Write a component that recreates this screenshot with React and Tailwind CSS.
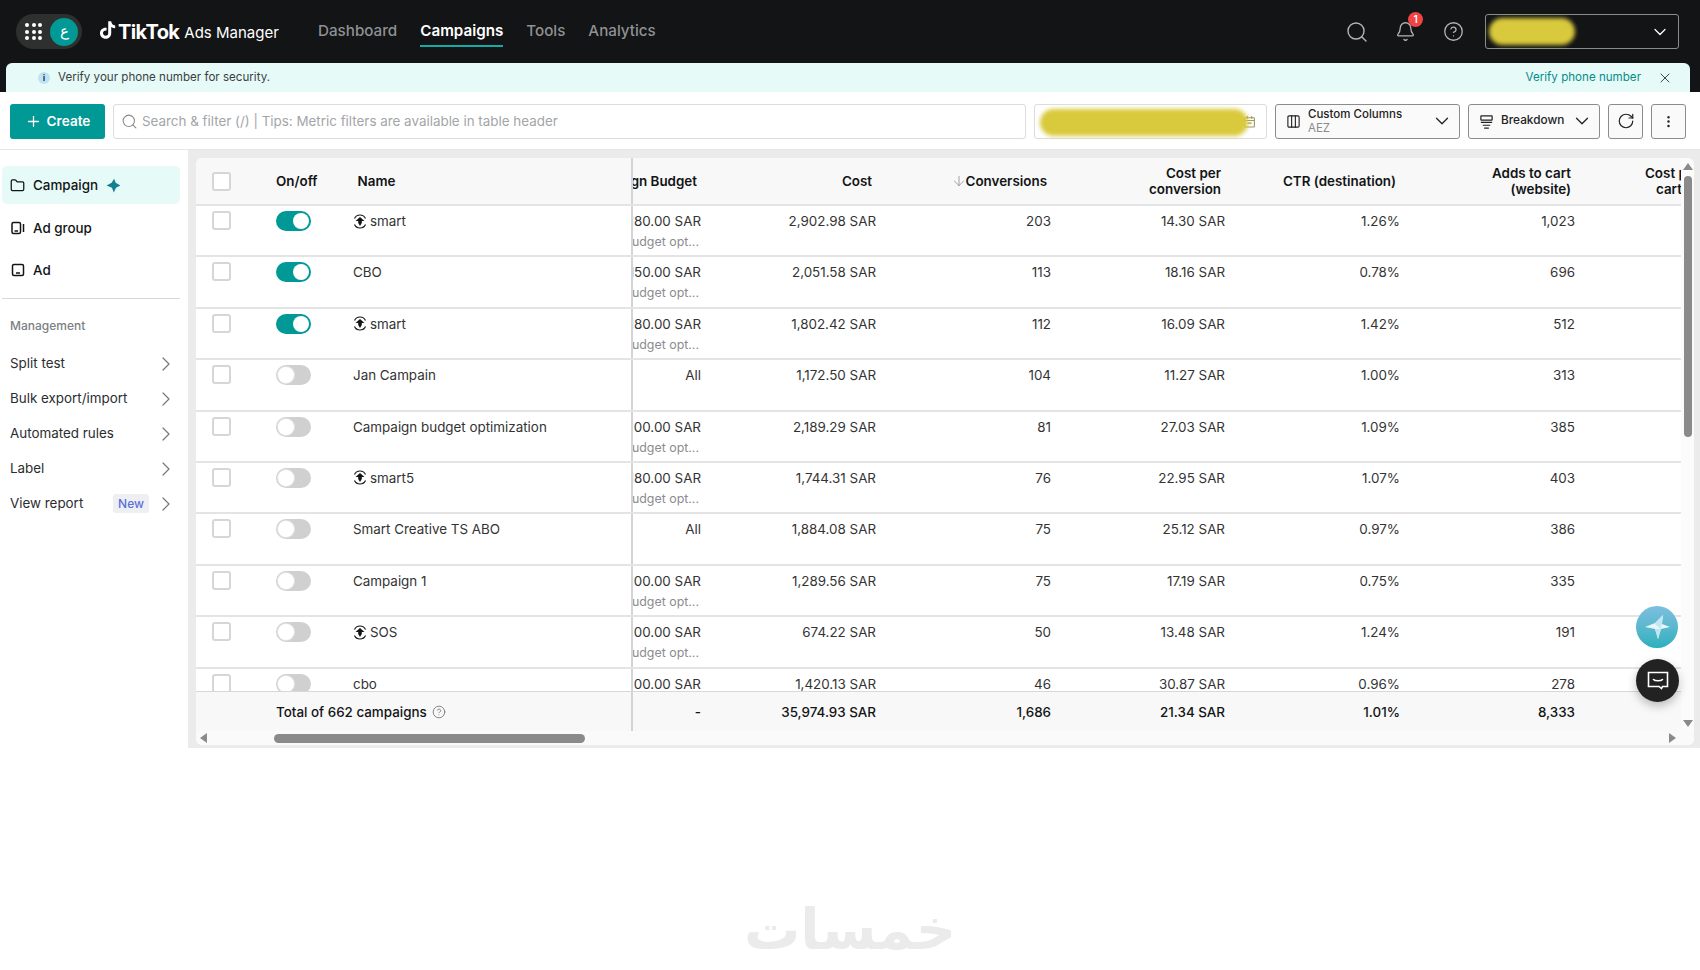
import { Search, Bell, CircleHelp, ChevronDown, ChevronRight, X, Plus, Columns3, RotateCw, EllipsisVertical, Folder, ArrowDown } from 'lucide-react'

const rows = [
  { name: 'smart', smart: true, on: true, budget: '180.00 SAR', cost: '2,902.98 SAR', conv: '203', cpc: '14.30 SAR', ctr: '1.26%', atc: '1,023' },
  { name: 'CBO', on: true, budget: '150.00 SAR', cost: '2,051.58 SAR', conv: '113', cpc: '18.16 SAR', ctr: '0.78%', atc: '696' },
  { name: 'smart', smart: true, on: true, budget: '180.00 SAR', cost: '1,802.42 SAR', conv: '112', cpc: '16.09 SAR', ctr: '1.42%', atc: '512' },
  { name: 'Jan Campain', budget: 'All', cost: '1,172.50 SAR', conv: '104', cpc: '11.27 SAR', ctr: '1.00%', atc: '313' },
  { name: 'Campaign budget optimization', budget: '100.00 SAR', cost: '2,189.29 SAR', conv: '81', cpc: '27.03 SAR', ctr: '1.09%', atc: '385' },
  { name: 'smart5', smart: true, budget: '180.00 SAR', cost: '1,744.31 SAR', conv: '76', cpc: '22.95 SAR', ctr: '1.07%', atc: '403' },
  { name: 'Smart Creative TS ABO', budget: 'All', cost: '1,884.08 SAR', conv: '75', cpc: '25.12 SAR', ctr: '0.97%', atc: '386' },
  { name: 'Campaign 1', budget: '100.00 SAR', cost: '1,289.56 SAR', conv: '75', cpc: '17.19 SAR', ctr: '0.75%', atc: '335' },
  { name: 'SOS', smart: true, budget: '100.00 SAR', cost: '674.22 SAR', conv: '50', cpc: '13.48 SAR', ctr: '1.24%', atc: '191' },
  { name: 'cbo', budget: '100.00 SAR', cost: '1,420.13 SAR', conv: '46', cpc: '30.87 SAR', ctr: '0.96%', atc: '278' },
]

const managementItems = ['Split test', 'Bulk export/import', 'Automated rules', 'Label', 'View report']

const Sparkle = ({ className }) => (
  <svg className={className} viewBox="0 0 24 24" fill="currentColor">
    <path d="M13 1l2.500 6.500L23 12l-7 3.500L12.500 23l-3-7.500L1 12l8-4.500z" />
  </svg>
)

const SmartIcon = () => (
  <svg className="w-[14px] h-[15px] shrink-0" viewBox="0 0 14 15" fill="none" stroke="#121415" strokeWidth="1.2">
    <path d="M1.500 4.500C2.500 2.300 4.500 1 7 1s4.500 1.300 5.500 3.500M1.500 10.500C2.500 12.700 4.500 14 7 14s4.500-1.300 5.500-3.500" />
    <path d="M7 3L11.500 7H8.800V9L7 12 5.200 9V7H2.500z" fill="#121415" stroke="none" />
  </svg>
)

const Toggle = ({ on }) => (
  <div className={`w-[35px] h-5 rounded-full flex items-center shrink-0 px-[2px] ${on ? 'bg-[#009995] justify-end' : 'bg-[#d0d0d0] justify-start'}`}>
    <div className={`w-4 h-4 rounded-full bg-white ${on ? '' : 'ring-1 ring-[#e4e4e4]'}`} />
  </div>
)

const Checkbox = () => (
  <div className="w-[19px] h-[19px] rounded-[3px] border-2 border-[#d6d6d6] bg-white shrink-0" />
)

const Arrow = ({ dir }) => {
  const shapes = {
    up: 'border-x-[5px] border-x-transparent border-b-[7px] border-b-[#8a8a8a]',
    down: 'border-x-[5px] border-x-transparent border-t-[7px] border-t-[#8a8a8a]',
    left: 'border-y-[5px] border-y-transparent border-r-[7px] border-r-[#8a8a8a]',
    right: 'border-y-[5px] border-y-transparent border-l-[7px] border-l-[#8a8a8a]',
  }
  return <div className={`w-0 h-0 ${shapes[dir]}`} />
}

const HeadCell = ({ children, className = 'w-[175px]' }) => (
  <div className={`${className} shrink-0 pr-2 text-right leading-[16px] font-semibold`}>{children}</div>
)

const Cell = ({ children, className = 'w-[175px]' }) => (
  <div className={`${className} shrink-0 pr-1 pt-[6px] text-right leading-[18px]`}>{children}</div>
)

const TopBar = () => (
  <header className="h-[63px] bg-[#121415] flex items-center shrink-0 pl-4 pr-[21px]">
    <div className="w-[66px] h-[35px] rounded-full bg-[#2e2f2f] flex items-center justify-between pl-[9px] pr-[4px]">
      <div className="grid grid-cols-3 gap-[2.5px]">
        {Array.from({ length: 9 }).map((_, i) => (
          <span key={i} className="w-[4px] h-[4px] rounded-full bg-white" />
        ))}
      </div>
      <div className="w-[28px] h-[28px] rounded-full bg-[#009995] text-white text-[15px] flex items-center justify-center">ع</div>
    </div>
    <div className="flex items-center ml-[16px] w-[188px] text-white">
      <svg className="w-[19px] h-[22px] mb-1" viewBox="0 0 24 24" fill="currentColor">
        <path d="M16.600 1c.4 3 2.200 5 5.100 5.300v3.400c-1.800 0-3.500-.6-5-1.600v7.600c0 4.500-3.400 7.300-7 7.300-4.200 0-7.200-3.200-7.200-7 0-4.500 3.900-7.500 8.300-6.800v3.600c-2.200-.6-4.500.8-4.500 3.100 0 2 1.600 3.400 3.400 3.400 2 0 3.200-1.400 3.200-3.500V1z" />
      </svg>
      <span className="text-[20px] font-bold tracking-[-0.6px] ml-[1px]">TikTok</span>
      <span className="text-[15px] ml-[5px] mt-[3px]">Ads Manager</span>
    </div>
    <nav className="flex items-center gap-[23px] ml-[32px] text-[15.2px] text-[#8f9194] font-medium">
      <span>Dashboard</span>
      <span className="relative text-white font-semibold">
        Campaigns
        <span className="absolute left-0 right-0 -bottom-[4px] h-[2px] bg-[#17a9a5]" />
      </span>
      <span>Tools</span>
      <span>Analytics</span>
    </nav>
    <div className="ml-auto flex items-center">
      <Search className="w-[24px] h-[24px] text-[#b4b4b4]" strokeWidth={1.4} />
      <div className="relative ml-[26px]">
        <Bell className="w-[21px] h-[21px] text-[#b4b4b4]" strokeWidth={1.5} />
        <span className="absolute -top-[9px] -right-[7px] w-[15px] h-[15px] rounded-full bg-[#f04444] text-white text-[10px] font-semibold flex items-center justify-center">1</span>
      </div>
      <CircleHelp className="w-[21px] h-[21px] ml-[27px] text-[#b4b4b4]" strokeWidth={1.5} />
      <div className="relative w-[194px] h-[35px] ml-[21px] rounded-[3px] border border-[#8c8c8c] flex items-center justify-end pr-[8px]">
        <div className="absolute left-[3px] top-[3px] w-[86px] h-[27px] rounded-full bg-[#d9c93c] blur-[2px]" />
        <ChevronDown className="w-[20px] h-[20px] text-white" strokeWidth={1.5} />
      </div>
    </div>
  </header>
)

const Banner = () => (
  <div className="h-[29px] bg-[#121415] pl-[6px] pr-[10px] shrink-0">
    <div className="h-full rounded-t-[6px] bg-[#e6faf8] flex items-center pl-[32px] pr-[17px] text-[11.6px]">
      <span className="w-[12px] h-[12px] rounded-full bg-[#bfe3f2] text-[#23405c] text-[9px] font-bold flex items-center justify-center">i</span>
      <span className="ml-[8px] text-[#3c3f41]">Verify your phone number for security.</span>
      <span className="ml-auto text-[#078d8a]">Verify phone number</span>
      <X className="w-[16px] h-[16px] ml-[16px] text-[#444]" strokeWidth={1.5} />
    </div>
  </div>
)

const Toolbar = () => (
  <div className="h-[58px] bg-white border-b border-[#e6e6e6] flex items-center gap-2 pl-[10px] pr-[14px] pt-[1px] shrink-0">
    <button className="w-[95px] h-[35px] rounded-[3px] bg-[#009995] text-white text-[13.6px] font-semibold flex items-center justify-center gap-[5px]">
      <Plus className="w-[17px] h-[17px]" strokeWidth={1.8} />
      Create
    </button>
    <div className="w-[913px] h-[35px] rounded-[3px] border border-[#dcdcdc] flex items-center pl-[7px] text-[13.4px] text-[#a3a5a8]">
      <Search className="w-[17px] h-[17px] text-[#8a8a8a]" strokeWidth={1.5} />
      <span className="ml-[4px]">Search &amp; filter (/) | Tips: Metric filters are available in table header</span>
    </div>
    <div className="relative w-[233px] h-[35px] rounded-[3px] border border-[#dcdcdc] flex items-center justify-end pr-[10px]">
      <svg className="w-[13px] h-[13px] text-[#9a9a60]" viewBox="0 0 24 24" fill="none" stroke="currentColor" strokeWidth="2">
        <rect x="3" y="5" width="18" height="17" rx="1" />
        <path d="M3 10h18M8 2v5M16 2v5M8 15h8" />
      </svg>
      <div className="absolute left-[5px] top-[4px] w-[208px] h-[27px] rounded-full bg-[#d9c93c] blur-[2px]" />
    </div>
    <button className="w-[185px] h-[35px] rounded-[3px] border border-[#8c8c8c] flex items-center pl-[10px] pr-[6px] bg-[#fafafa]">
      <Columns3 className="w-[15px] h-[15px] text-[#222]" strokeWidth={1.8} />
      <span className="ml-[7px] flex flex-col items-start text-[11.5px] leading-[14px]">
        <span className="font-medium text-[#222]">Custom Columns</span>
        <span className="text-[#8a8a8a]">AEZ</span>
      </span>
      <ChevronDown className="ml-auto w-[22px] h-[22px] text-[#222]" strokeWidth={1.4} />
    </button>
    <button className="w-[132px] h-[35px] rounded-[3px] border border-[#8c8c8c] flex items-center pl-[10px] pr-[6px] bg-[#fafafa]">
      <svg className="w-[15px] h-[15px] text-[#222]" viewBox="0 0 16 16" fill="none" stroke="currentColor" strokeWidth="1.3">
        <rect x="2" y="2" width="12" height="4.500" rx="0.5" />
        <path d="M2 9h12M4 12h8M5.500 15h5" />
      </svg>
      <span className="ml-[7px] text-[11.8px] font-medium text-[#222]">Breakdown</span>
      <ChevronDown className="ml-auto w-[22px] h-[22px] text-[#222]" strokeWidth={1.4} />
    </button>
    <button className="w-[35px] h-[35px] rounded-[3px] border border-[#8c8c8c] flex items-center justify-center bg-[#fafafa]">
      <RotateCw className="w-[18px] h-[18px] text-[#222]" strokeWidth={1.6} />
    </button>
    <button className="w-[35px] h-[35px] rounded-[3px] border border-[#8c8c8c] flex items-center justify-center bg-[#fafafa]">
      <EllipsisVertical className="w-[15px] h-[15px] text-[#222]" strokeWidth={2} />
    </button>
  </div>
)

const Sidebar = () => (
  <aside className="w-[188px] shrink-0 bg-white pl-[2px] pr-[8px] pt-4 text-[13.4px] text-[#2b2d2f]">
    <div className="h-[38px] rounded-[5px] bg-[#e6faf8] flex items-center pl-[8px] font-medium text-[#121415]">
      <Folder className="w-[15px] h-[15px]" strokeWidth={2} />
      <span className="ml-[8px]">Campaign</span>
      <Sparkle className="w-[15px] h-[15px] ml-[8px] text-[#12808f]" />
    </div>
    <div className="h-[38px] mt-[5px] flex items-center pl-[9px] font-medium text-[#121415]">
      <svg className="w-[14px] h-[14px]" viewBox="0 0 14 14" fill="none" stroke="currentColor" strokeWidth="1.500">
        <rect x="1" y="1.500" width="8.500" height="11" rx="1.500" />
        <path d="M3.500 10h3.500M12.500 3v8" />
      </svg>
      <span className="ml-[8px]">Ad group</span>
    </div>
    <div className="h-[38px] mt-[4px] flex items-center pl-[9px] font-medium text-[#121415]">
      <svg className="w-[14px] h-[14px]" viewBox="0 0 14 14" fill="none" stroke="currentColor" strokeWidth="1.500">
        <rect x="1.500" y="1.500" width="11" height="11" rx="1.500" />
        <path d="M5 10h4" />
      </svg>
      <span className="ml-[8px]">Ad</span>
    </div>
    <div className="h-[1px] bg-[#d8d8d8] mt-[9px]" />
    <div className="text-[12px] font-medium text-[#7d8084] pl-2 mt-[20px] leading-[14px]">Management</div>
    <div className="mt-[13px]">
      {managementItems.map((item) => (
        <div key={item} className="h-[35px] flex items-center pl-2 pr-[2px]">
          <span>{item}</span>
          {item === 'View report' && (
            <span className="ml-auto w-[36px] h-[19px] rounded-[3px] bg-[#eeeff2] text-[#5b6fd9] text-[12px] font-medium flex items-center justify-center">New</span>
          )}
          <ChevronRight className={`w-[24px] h-[24px] text-[#777] ${item === 'View report' ? 'ml-[5px]' : 'ml-auto'}`} strokeWidth={1.2} />
        </div>
      ))}
    </div>
  </aside>
)

const CampaignTable = () => (
  <div className="w-[1498px] h-[587px] rounded-[6px] bg-[#fbfbfb] overflow-hidden flex flex-col">
    <div className="flex h-[573px]">
      <div className="w-[1485px] flex flex-col text-[13.4px] text-[#333]">
        <div className="h-[48px] shrink-0 flex items-center bg-[#f8f8f8] border-b-2 border-[#e4e4e4] text-[#121415] overflow-hidden">
          <div className="w-[437px] h-full shrink-0 flex items-center border-r-2 border-[#d4d4d4] pl-4 font-semibold">
            <Checkbox />
            <span className="ml-[45px]">On/off</span>
            <span className="ml-[40px]">Name</span>
          </div>
          <div className="w-[72px] shrink-0 pr-2 flex justify-end overflow-hidden whitespace-nowrap font-semibold">Campaign Budget</div>
          <HeadCell>Cost</HeadCell>
          <HeadCell>
            <span className="inline-flex items-center h-[16px] mt-[2px]">
              <ArrowDown className="w-[16px] h-[16px] -mr-[1px] text-[#8a8a8a]" strokeWidth={1.2} />
              Conversions
            </span>
          </HeadCell>
          <HeadCell className="w-[174px]">Cost per<br />conversion</HeadCell>
          <HeadCell>CTR (destination)</HeadCell>
          <HeadCell>Adds to cart<br />(website)</HeadCell>
          <div className="w-[103px] shrink-0 overflow-hidden whitespace-nowrap leading-[16px] font-semibold">
            <div className="ml-[66px]">Cost per</div>
            <div className="ml-[77px]">cart</div>
          </div>
        </div>
        <div className="h-[485px] shrink-0 overflow-hidden bg-white">
          {rows.map((row, i) => (
            <div key={i} className="h-[51.4px] flex border-b-2 border-[#e4e4e4] overflow-hidden">
              <div className="w-[437px] shrink-0 flex items-start border-r-2 border-[#d4d4d4] pl-4 pt-[5px]">
                <Checkbox />
                <div className="ml-[45px]"><Toggle on={row.on} /></div>
                <div className="ml-[42px] pt-[1px] leading-[18px] flex items-center gap-[3px]">
                  {row.smart && <SmartIcon />}
                  {row.name}
                </div>
              </div>
              <div className="w-[72px] shrink-0 pr-1 pt-[6px] overflow-hidden whitespace-nowrap flex flex-col items-end leading-[18px]">
                <span>{row.budget}</span>
                {row.budget !== 'All' && <span className="mt-[3px] pr-[2px] text-[12.4px] text-[#8a8c8f]">Campaign budget opt...</span>}
              </div>
              <Cell>{row.cost}</Cell>
              <Cell>{row.conv}</Cell>
              <Cell className="w-[174px]">{row.cpc}</Cell>
              <Cell>{row.ctr}</Cell>
              <Cell>{row.atc}</Cell>
            </div>
          ))}
        </div>
        <div className="h-[40px] shrink-0 flex items-center bg-[#f8f8f8] border-t border-[#d8d8d8] overflow-hidden font-medium text-[#121415]">
          <div className="w-[437px] h-full shrink-0 flex items-center border-r-2 border-[#d4d4d4] pl-[80px] pt-[1px]">
            Total of 662 campaigns
            <CircleHelp className="w-[14px] h-[14px] ml-[5px] text-[#777]" strokeWidth={1.5} />
          </div>
          <div className="w-[72px] shrink-0 pr-1 pt-[1px] text-right">-</div>
          <div className="w-[175px] shrink-0 pr-1 pt-[1px] text-right">35,974.93 SAR</div>
          <div className="w-[175px] shrink-0 pr-1 pt-[1px] text-right">1,686</div>
          <div className="w-[174px] shrink-0 pr-1 pt-[1px] text-right">21.34 SAR</div>
          <div className="w-[175px] shrink-0 pr-1 pt-[1px] text-right">1.01%</div>
          <div className="w-[175px] shrink-0 pr-1 pt-[1px] text-right">8,333</div>
        </div>
      </div>
      <div className="w-[13px] flex flex-col items-center pt-[5px] pb-[4px]">
        <Arrow dir="up" />
        <div className="w-[8px] h-[261px] mt-[6px] rounded-full bg-[#8a8a8a]" />
        <div className="mt-auto"><Arrow dir="down" /></div>
      </div>
    </div>
    <div className="h-[14px] flex items-center bg-[#fafafa] pl-[4px] pr-[18px]">
      <Arrow dir="left" />
      <div className="w-[311px] h-[9px] ml-[67px] rounded-full bg-[#8a8a8a]" />
      <div className="ml-auto"><Arrow dir="right" /></div>
    </div>
  </div>
)

const FloatingButtons = () => (
  <>
    <div className="absolute left-[1636px] top-[606px] w-[42px] h-[42px] rounded-full bg-linear-to-b from-[#7cbfe0] to-[#28b0bd] flex items-center justify-center">
      <svg className="w-[30px] h-[30px]" viewBox="0 0 30 30">
        <path d="M21 3l-1 9 8 3-9 2-3 10-3-10-10-2 10-4z" fill="#e6f6fb" />
        <path d="M21 3l-8 9 6 5z" fill="#c4e6f2" />
        <path d="M13 17l6 0-3 10z" fill="#bfe6ee" />
      </svg>
    </div>
    <div className="absolute left-[1636px] top-[659px] w-[43px] h-[43px] rounded-full bg-[#222] shadow-[0_4px_10px_rgba(0,0,0,0.25)] flex items-center justify-center">
      <svg className="w-[22px] h-[22px] text-white" viewBox="0 0 22 22" fill="none" stroke="currentColor" strokeWidth="1.600">
        <path d="M1.500 2.500h19v14h-5l-1 2-2.500-2h-10.500z" />
        <path d="M6.500 9.500c1.500 1.700 7.500 1.700 9 0" strokeLinecap="round" />
      </svg>
    </div>
  </>
)

const App = () => (
  <div className="relative w-[1700px] h-[970px] bg-white overflow-hidden flex flex-col font-['Inter',sans-serif]">
    <TopBar />
    <Banner />
    <Toolbar />
    <div className="flex h-[598px] shrink-0 bg-[#ebebeb]">
      <Sidebar />
      <div className="pl-2 pt-2"><CampaignTable /></div>
    </div>
    <div className="flex-1 flex justify-center items-end pb-[8px]">
      <span className="text-[56px] leading-[64px] font-bold text-[#ebebeb] font-['DejaVu_Sans',sans-serif]">خمسات</span>
    </div>
    <FloatingButtons />
  </div>
)

export default App
